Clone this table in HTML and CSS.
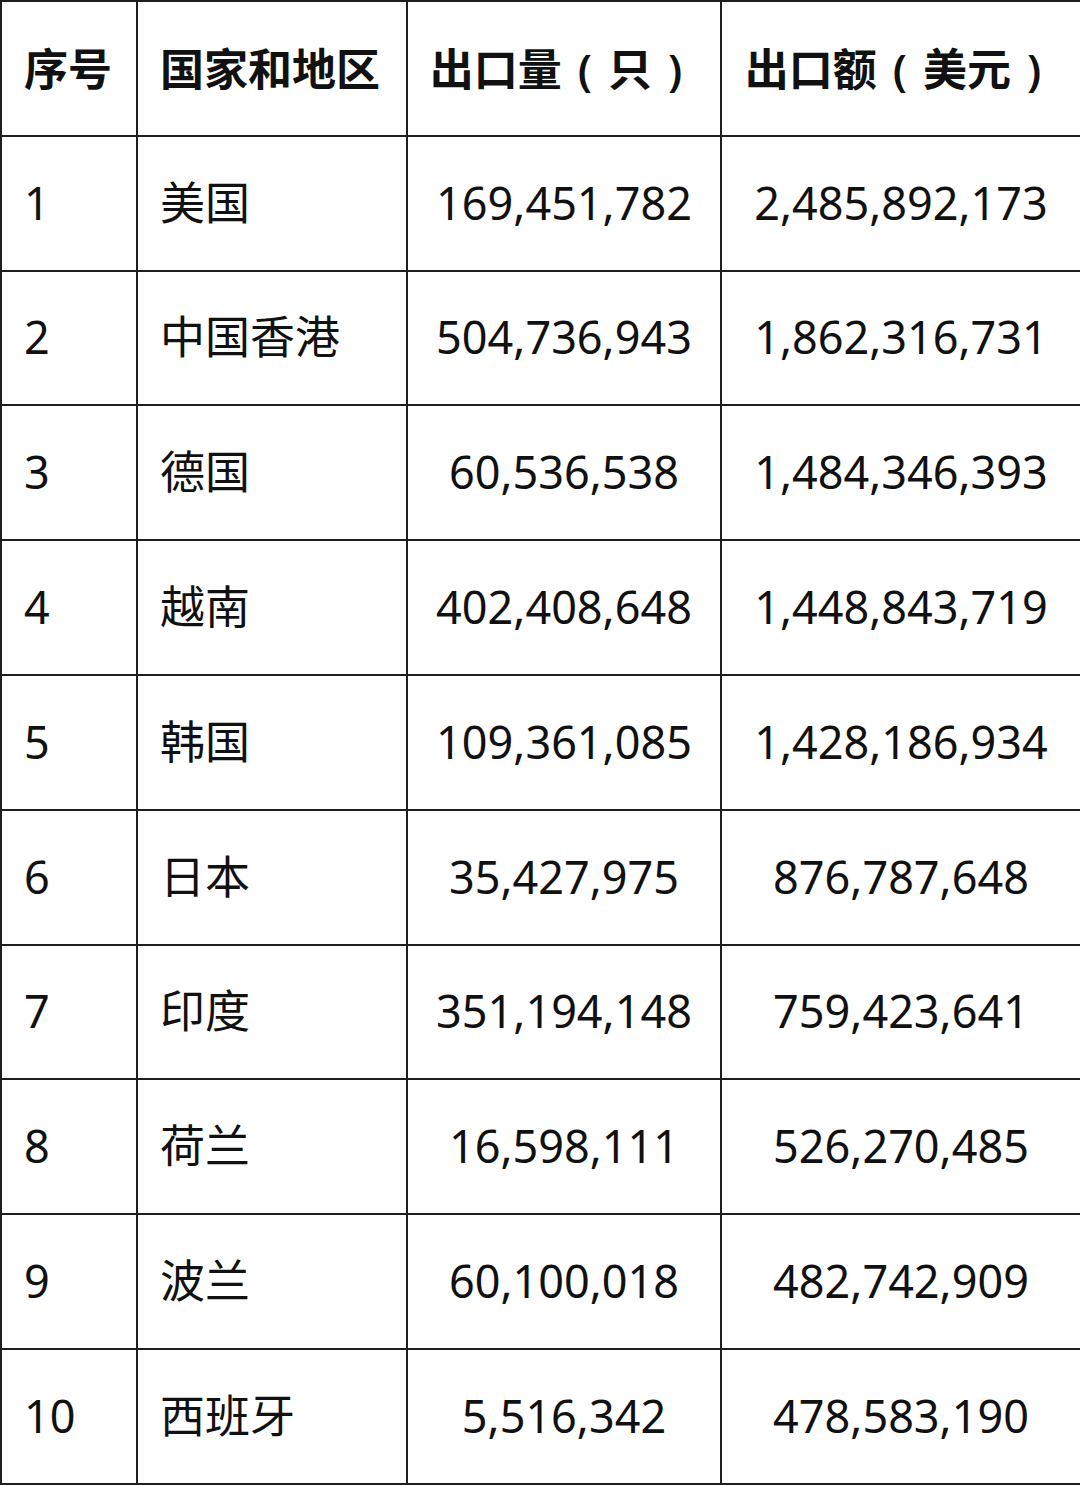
FILE: index.html
```html
<!DOCTYPE html>
<html lang="zh-CN">
<head>
<meta charset="utf-8">
<title>出口统计</title>
<link rel="stylesheet" href="styles.css">
</head>
<body>
<table class="data">
  <colgroup>
    <col class="c1"><col class="c2"><col class="c3"><col class="c4">
  </colgroup>
  <thead>
    <tr>
      <th class="left">序号</th>
      <th class="left">国家和地区</th>
      <th class="center">出口量<span class="paren">(</span>只<span class="paren">)</span></th>
      <th class="center">出口额<span class="paren">(</span>美元<span class="paren">)</span></th>
    </tr>
  </thead>
  <tbody>
    <tr><td class="left">1</td><td class="left">美国</td><td class="center">169,451,782</td><td class="center">2,485,892,173</td></tr>
    <tr><td class="left">2</td><td class="left">中国香港</td><td class="center">504,736,943</td><td class="center">1,862,316,731</td></tr>
    <tr><td class="left">3</td><td class="left">德国</td><td class="center">60,536,538</td><td class="center">1,484,346,393</td></tr>
    <tr><td class="left">4</td><td class="left">越南</td><td class="center">402,408,648</td><td class="center">1,448,843,719</td></tr>
    <tr><td class="left">5</td><td class="left">韩国</td><td class="center">109,361,085</td><td class="center">1,428,186,934</td></tr>
    <tr><td class="left">6</td><td class="left">日本</td><td class="center">35,427,975</td><td class="center">876,787,648</td></tr>
    <tr><td class="left">7</td><td class="left">印度</td><td class="center">351,194,148</td><td class="center">759,423,641</td></tr>
    <tr><td class="left">8</td><td class="left">荷兰</td><td class="center">16,598,111</td><td class="center">526,270,485</td></tr>
    <tr><td class="left">9</td><td class="left">波兰</td><td class="center">60,100,018</td><td class="center">482,742,909</td></tr>
    <tr><td class="left">10</td><td class="left">西班牙</td><td class="center">5,516,342</td><td class="center">478,583,190</td></tr>
  </tbody>
</table>
</body>
</html>
```
FILE: styles.css
```css
html, body {
  margin: 0;
  padding: 0;
  background: #ffffff;
}

.data {
  width: 1080px;
  border-collapse: collapse;
  table-layout: fixed;
  font-family: "Noto Sans", "Noto Sans CJK SC", sans-serif;
  font-size: 45px;
  color: #111111;
}

.c1 { width: 136px; }
.c2 { width: 270px; }
.c3 { width: 314px; }
.c4 { width: 360px; }

.data tr {
  height: 134.8px;
}

.data th,
.data td {
  border: 2px solid #1e1e1e;
  padding: 0 0 2px 0;
  white-space: nowrap;
  vertical-align: middle;
  line-height: 1;
}

.data th {
  font-weight: 700;
  font-size: 44px;
  padding: 2px 0 0 0;
}

.paren {
  display: inline-block;
  width: 1.05em;
  text-align: center;
  font-weight: 600;
}

.left {
  text-align: left;
  padding-left: 22px !important;
}

.center {
  text-align: center;
}
```
